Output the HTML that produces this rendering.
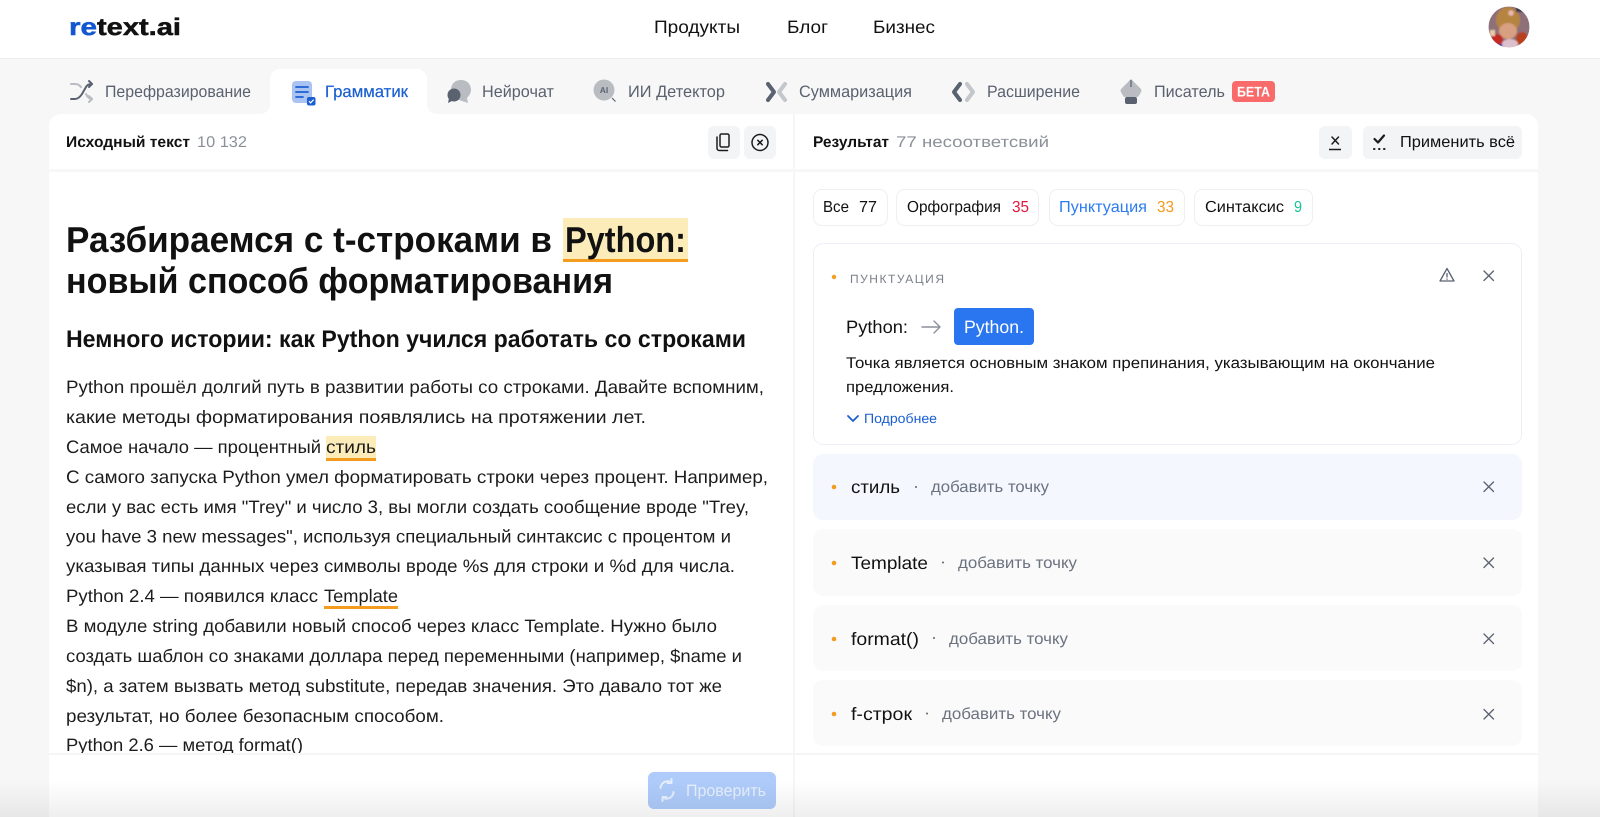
<!DOCTYPE html>
<html lang="ru">
<head>
<meta charset="utf-8">
<title>retext.ai</title>
<style>
html,body{margin:0;padding:0;width:1600px;height:817px;overflow:hidden;background:#f7f7f7}
svg{display:block}
text{font-family:"Liberation Sans",Arial,sans-serif;fill:#111}
.tab{font-size:16.5px;fill:#5a6270}
.b{font-size:18px;fill:#1c1c1c}
.s{font-size:16px}
.ln{fill:none;stroke-linecap:round;stroke-linejoin:round}
</style>
</head>
<body>
<svg xmlns="http://www.w3.org/2000/svg" width="1600" height="817" viewBox="0 0 1600 817" text-rendering="geometricPrecision">
<defs>
<clipPath id="av"><circle cx="1509" cy="27" r="20.5"/></clipPath>
<clipPath id="body"><rect x="49" y="172" width="744" height="581"/></clipPath>
<linearGradient id="sh" x1="0" y1="0" x2="0" y2="1"><stop offset="0" stop-color="#000" stop-opacity="0"/><stop offset="1" stop-color="#000" stop-opacity=".065"/></linearGradient>
<filter id="bl" x="-20%" y="-20%" width="140%" height="140%"><feGaussianBlur stdDeviation=".8"/></filter>
</defs>

<rect width="1600" height="817" fill="#f7f7f7"/>
<!-- header -->
<rect width="1600" height="58" fill="#fff"/>
<rect y="58" width="1600" height="1" fill="#eeeeee"/>
<text x="69" y="35" font-size="24" font-weight="700" style="fill:#1357d0;stroke:#1357d0;stroke-width:.5" textLength="28" lengthAdjust="spacingAndGlyphs">re</text>
<text x="97" y="35" font-size="24" font-weight="700" style="fill:#111;stroke:#111;stroke-width:.5" textLength="84" lengthAdjust="spacingAndGlyphs">text.ai</text>
<text x="654" y="33" font-size="18" textLength="86" lengthAdjust="spacingAndGlyphs">Продукты</text>
<text x="787" y="33" font-size="18" textLength="41" lengthAdjust="spacingAndGlyphs">Блог</text>
<text x="873" y="33" font-size="18" textLength="62" lengthAdjust="spacingAndGlyphs">Бизнес</text>
<!-- avatar -->
<g clip-path="url(#av)"><g filter="url(#bl)">
<rect x="1488" y="6" width="42" height="42" fill="#8d6f78"/>
<ellipse cx="1508" cy="20" rx="12" ry="13" fill="#b5843f"/>
<circle cx="1511" cy="13" r="2.800" fill="#e9b7ae"/>
<rect x="1516" y="5" width="8" height="7" fill="#3a3550"/>
<ellipse cx="1508" cy="31" rx="9" ry="8" fill="#d89f80"/>
<ellipse cx="1497" cy="40" rx="6" ry="6" fill="#c22a22"/>
<ellipse cx="1522" cy="39" rx="6" ry="7" fill="#b8401f"/>
<ellipse cx="1510" cy="44" rx="8" ry="5" fill="#dcc0cb"/>
<rect x="1490" y="30" width="5" height="6" fill="#e8c9a8"/>
<rect x="1497" y="44" width="5" height="4" fill="#2b3a9a"/>
</g></g>

<!-- panel -->
<path d="M49 817V126a12 12 0 0 1 12-12H1526a12 12 0 0 1 12 12V817Z" fill="#fff"/>
<!-- active tab -->
<path d="M260 114a10 10 0 0 0 10-10V79a10 10 0 0 1 10-10H417a10 10 0 0 1 10 10V104a10 10 0 0 0 10 10Z" fill="#fff"/>
<rect x="793" y="114" width="2" height="703" fill="#f6f6f6"/>
<rect x="49" y="169" width="1489" height="3" fill="#f7f7f7"/>
<rect x="49" y="753" width="1489" height="2" fill="#f5f5f5"/>

<!-- tabs -->
<g class="ln" stroke-width="2">
<path d="M71 99h4c3 0 5-2 7-5l4-7c1-2 3-3 6-3" stroke="#5a6270"/>
<path d="M89 81l3 3-3 3" stroke="#5a6270"/>
<path d="M71 84h4c3 0 4 1 6 3M86 94c1 2 3 5 6 5" stroke="#b9bcc1"/>
<path d="M89 96l3 3-3 3" stroke="#b9bcc1"/>
</g>
<text class="tab" x="105" y="97" textLength="146" lengthAdjust="spacingAndGlyphs">Перефразирование</text>

<rect x="292" y="81" width="20" height="22" rx="4" fill="#a9c4f2"/>
<g stroke="#1a5fd0" stroke-width="1.800" class="ln"><path d="M296 87h12M296 92h12M296 97h7"/></g>
<rect x="307" y="97" width="8.500" height="8.500" rx="2" fill="#1a5fd0"/>
<path d="M309 101.200l1.600 1.700 3-3.200" fill="none" stroke="#fff" stroke-width="1.200"/>
<text x="325" y="97" font-size="16.500" style="fill:#1a5fd0;stroke:#1a5fd0;stroke-width:.2" textLength="83" lengthAdjust="spacingAndGlyphs">Грамматик</text>

<path d="M461 80c-7 0-10 5-10 10 0 5 3 9 8 10l9 3-1-5c2-2 4-5 4-8 0-6-4-10-10-10Z" fill="#b9bcc1"/>
<circle cx="454" cy="95" r="6.500" fill="#5a6270"/>
<path d="M449 98l-1 5 4-2Z" fill="#5a6270"/>
<text class="tab" x="482" y="97" textLength="72" lengthAdjust="spacingAndGlyphs">Нейрочат</text>

<circle cx="604" cy="90" r="10.500" fill="#b9bcc1"/>
<path d="M612 98l3.500 3.500" stroke="#5a6270" stroke-width="1.200" fill="none"/>
<text x="604" y="93" font-size="8.500" font-weight="700" text-anchor="middle" style="fill:#5a6270">AI</text>
<text class="tab" x="628" y="97" textLength="97" lengthAdjust="spacingAndGlyphs">ИИ Детектор</text>

<g class="ln" stroke-width="4"><path d="M768 84l6 8-6 8" stroke="#5a6270"/><path d="M785 84l-6 8 6 8" stroke="#c3c6ca"/></g>
<text class="tab" x="799" y="97" textLength="113" lengthAdjust="spacingAndGlyphs">Суммаризация</text>

<g class="ln" stroke-width="4"><path d="M960 84l-6 8 6 8" stroke="#5a6270"/><path d="M967 84l6 8-6 8" stroke="#c3c6ca"/></g>
<text class="tab" x="987" y="97" textLength="93" lengthAdjust="spacingAndGlyphs">Расширение</text>

<path d="M1131 79l10 10c1 2 0 3-1 5l-2 3h-14l-2-3c-1-2-2-3-1-5Z" fill="#b9bcc1"/>
<path d="M1131 80v7" stroke="#5a6270" stroke-width="1.200"/>
<rect x="1125" y="97" width="12" height="7" rx="2" fill="#5a6270"/>
<text class="tab" x="1154" y="97" textLength="71" lengthAdjust="spacingAndGlyphs">Писатель</text>
<rect x="1232" y="81" width="43" height="21" rx="4" fill="#f96b6b"/>
<text x="1237" y="96.500" font-size="14" font-weight="700" style="fill:#fff" textLength="33" lengthAdjust="spacingAndGlyphs">БЕТА</text>

<!-- left head -->
<text x="66" y="147" font-size="15.500" font-weight="700" textLength="124" lengthAdjust="spacingAndGlyphs">Исходный текст</text>
<text x="197" y="147" font-size="15.500" style="fill:#8b9098" textLength="50" lengthAdjust="spacingAndGlyphs">10 132</text>
<rect x="708" y="126" width="32" height="33" rx="6" fill="#f3f4f6"/>
<rect x="744" y="126" width="32" height="33" rx="6" fill="#f3f4f6"/>
<g class="ln" stroke="#1c1c1c" stroke-width="1.500">
<rect x="720" y="134" width="9" height="13" rx="1.500"/>
<path d="M717 137v11c0 1.500 1 2.500 2.500 2.500h8"/>
<circle cx="760" cy="142.500" r="8"/>
<path d="M757.800 140.300l4.400 4.400M762.200 140.300l-4.400 4.400"/>
</g>

<!-- body -->
<rect x="563" y="218" width="125" height="44" fill="#fbecba"/>
<rect x="563" y="259" width="125" height="3" fill="#f39c1f"/>
<text x="66" y="252" font-size="36" font-weight="700" textLength="486" lengthAdjust="spacingAndGlyphs">Разбираемся с t-строками в</text>
<text x="565" y="252" font-size="36" font-weight="700" textLength="121" lengthAdjust="spacingAndGlyphs">Python:</text>
<text x="66" y="293" font-size="36" font-weight="700" textLength="547" lengthAdjust="spacingAndGlyphs">новый способ форматирования</text>
<text x="66" y="347" font-size="24" font-weight="700" textLength="680" lengthAdjust="spacingAndGlyphs">Немного истории: как Python учился работать со строками</text>

<rect x="326" y="436" width="50" height="25" fill="#fbecba"/>
<rect x="326" y="458" width="50" height="3" fill="#f39c1f"/>
<rect x="324" y="606" width="74" height="3" fill="#f39c1f"/>
<g clip-path="url(#body)">
<text class="b" x="66" y="393" textLength="698" lengthAdjust="spacingAndGlyphs">Python прошёл долгий путь в развитии работы со строками. Давайте вспомним,</text>
<text class="b" x="66" y="423" textLength="580" lengthAdjust="spacingAndGlyphs">какие методы форматирования появлялись на протяжении лет.</text>
<text class="b" x="66" y="453" textLength="255" lengthAdjust="spacingAndGlyphs">Самое начало — процентный</text>
<text class="b" x="326" y="453" textLength="50" lengthAdjust="spacingAndGlyphs">стиль</text>
<text class="b" x="66" y="483" textLength="702" lengthAdjust="spacingAndGlyphs">С самого запуска Python умел форматировать строки через процент. Например,</text>
<text class="b" x="66" y="513" textLength="683" lengthAdjust="spacingAndGlyphs">если у вас есть имя "Trey" и число 3, вы могли создать сообщение вроде "Trey,</text>
<text class="b" x="66" y="542.500" textLength="665" lengthAdjust="spacingAndGlyphs">you have 3 new messages", используя специальный синтаксис с процентом и</text>
<text class="b" x="66" y="572" textLength="669" lengthAdjust="spacingAndGlyphs">указывая типы данных через символы вроде %s для строки и %d для числа.</text>
<text class="b" x="66" y="602" textLength="252" lengthAdjust="spacingAndGlyphs">Python 2.4 — появился класс</text>
<text class="b" x="324" y="602" textLength="74" lengthAdjust="spacingAndGlyphs">Template</text>
<text class="b" x="66" y="632" textLength="651" lengthAdjust="spacingAndGlyphs">В модуле string добавили новый способ через класс Template. Нужно было</text>
<text class="b" x="66" y="662" textLength="676" lengthAdjust="spacingAndGlyphs">создать шаблон со знаками доллара перед переменными (например, $name и</text>
<text class="b" x="66" y="692" textLength="656" lengthAdjust="spacingAndGlyphs">$n), а затем вызвать метод substitute, передав значения. Это давало тот же</text>
<text class="b" x="66" y="722" textLength="378" lengthAdjust="spacingAndGlyphs">результат, но более безопасным способом.</text>
<text class="b" x="66" y="751" textLength="237" lengthAdjust="spacingAndGlyphs">Python 2.6 — метод format()</text>
</g>

<!-- check button -->
<rect x="648" y="772" width="128" height="37" rx="6" fill="#aecbfa"/>
<g class="ln" stroke="#e6effd" stroke-width="2">
<path d="M660.500 788a7 7 0 0 1 10-6M673.500 792a7 7 0 0 1-10 6"/>
<path d="M671.500 779v4h-4M662.500 801v-4h4"/>
</g>
<text x="686" y="796" font-size="16.500" style="fill:#e6effd" textLength="80" lengthAdjust="spacingAndGlyphs">Проверить</text>

<!-- right head -->
<text x="813" y="147" font-size="15.500" font-weight="700" textLength="76" lengthAdjust="spacingAndGlyphs">Результат</text>
<text x="896" y="147" font-size="15.500" style="fill:#8b9098" textLength="153" lengthAdjust="spacingAndGlyphs">77 несоответсвий</text>
<rect x="1319" y="126" width="33" height="33" rx="6" fill="#f3f4f6"/>
<rect x="1363" y="126" width="159" height="33" rx="6" fill="#f3f4f6"/>
<g class="ln" stroke="#1c1c1c" stroke-width="1.500">
<path d="M1332 137l6.500 7M1338.500 137l-6.500 7"/>
<path d="M1329 149.500h12" stroke-linecap="butt"/>
<path d="M1374.500 139l3.500 3.500 6-7" stroke-width="2.200"/>
<path d="M1374 149h.5M1379 149h.5M1384 149h.5" stroke-width="2"/>
</g>
<text x="1400" y="147" font-size="16" textLength="115" lengthAdjust="spacingAndGlyphs">Применить всё</text>

<!-- chips -->
<g fill="#fff" stroke="#eeeff2">
<rect x="813.500" y="189.500" width="74" height="36" rx="8"/>
<rect x="896.500" y="189.500" width="142" height="36" rx="8"/>
<rect x="1049.500" y="189.500" width="135" height="36" rx="8"/>
<rect x="1194.500" y="189.500" width="118" height="36" rx="8"/>
</g>
<text class="s" x="823" y="212" textLength="26" lengthAdjust="spacingAndGlyphs">Все</text>
<text class="s" x="859" y="212" textLength="18" lengthAdjust="spacingAndGlyphs">77</text>
<text class="s" x="907" y="212" textLength="94" lengthAdjust="spacingAndGlyphs">Орфография</text>
<text class="s" x="1012" y="212" style="fill:#e5173f" textLength="17" lengthAdjust="spacingAndGlyphs">35</text>
<text class="s" x="1059" y="212" style="fill:#2b7bf2" textLength="88" lengthAdjust="spacingAndGlyphs">Пунктуация</text>
<text class="s" x="1157" y="212" style="fill:#f39c1f" textLength="17" lengthAdjust="spacingAndGlyphs">33</text>
<text class="s" x="1205" y="212" textLength="79" lengthAdjust="spacingAndGlyphs">Синтаксис</text>
<text class="s" x="1294" y="212" style="fill:#1cc29a" textLength="8" lengthAdjust="spacingAndGlyphs">9</text>

<!-- main card -->
<rect x="813.500" y="243.500" width="708" height="201" rx="10" fill="#fff" stroke="#ebeff5"/>
<circle cx="834" cy="277" r="2.200" fill="#f39c1f"/>
<text x="850" y="283" font-size="12" style="fill:#7b8088" textLength="94" lengthAdjust="spacing">ПУНКТУАЦИЯ</text>
<g class="ln" stroke="#5a6270" stroke-width="1.300">
<path d="M1447 268.500l7 12.500h-14Z"/>
<path d="M1447 273.500v3.500M1447 279v.2"/>
<path d="M1484 271l9.500 9.500M1493.500 271l-9.500 9.500"/>
</g>
<text x="846" y="333" font-size="18" textLength="62" lengthAdjust="spacingAndGlyphs">Python:</text>
<g class="ln" stroke="#8b9098" stroke-width="1.400"><path d="M922 327h18M934 321l6 6-6 6"/></g>
<rect x="954" y="308" width="80" height="37" rx="4" fill="#2a76f0"/>
<text x="964" y="333" font-size="18" style="fill:#fff" textLength="60" lengthAdjust="spacingAndGlyphs">Python.</text>
<text x="846" y="368" font-size="15.500" textLength="589" lengthAdjust="spacingAndGlyphs">Точка является основным знаком препинания, указывающим на окончание</text>
<text x="846" y="392" font-size="15.500" textLength="108" lengthAdjust="spacingAndGlyphs">предложения.</text>
<path class="ln" d="M848 416l5 5 5-5" stroke="#1a5fd0" stroke-width="1.800"/>
<text x="864" y="423" font-size="13.500" style="fill:#1a5fd0" textLength="73" lengthAdjust="spacingAndGlyphs">Подробнее</text>

<!-- rows -->
<rect x="813" y="454" width="709" height="66" rx="10" fill="#f4f7fe"/>
<rect x="813" y="529" width="709" height="67" rx="10" fill="#fafafa"/>
<rect x="813" y="605" width="709" height="66" rx="10" fill="#fafafa"/>
<rect x="813" y="680" width="709" height="66" rx="10" fill="#fafafa"/>
<g fill="#f39c1f"><circle cx="834" cy="487" r="2.300"/><circle cx="834" cy="563" r="2.300"/><circle cx="834" cy="639" r="2.300"/><circle cx="834" cy="714" r="2.300"/></g>
<g fill="#5a6270"><circle cx="916" cy="487" r="1"/><circle cx="943" cy="562.500" r="1"/><circle cx="934" cy="638" r="1"/><circle cx="927" cy="713.500" r="1"/></g>
<text x="851" y="493" font-size="18" textLength="49" lengthAdjust="spacingAndGlyphs">стиль</text>
<text x="931" y="492" font-size="16" style="fill:#6b7280" textLength="118" lengthAdjust="spacingAndGlyphs">добавить точку</text>
<text x="851" y="569" font-size="18" textLength="77" lengthAdjust="spacingAndGlyphs">Template</text>
<text x="958" y="568" font-size="16" style="fill:#6b7280" textLength="119" lengthAdjust="spacingAndGlyphs">добавить точку</text>
<text x="851" y="645" font-size="18" textLength="68" lengthAdjust="spacingAndGlyphs">format()</text>
<text x="949" y="644" font-size="16" style="fill:#6b7280" textLength="119" lengthAdjust="spacingAndGlyphs">добавить точку</text>
<text x="851" y="720" font-size="18" textLength="61" lengthAdjust="spacingAndGlyphs">f-строк</text>
<text x="942" y="719" font-size="16" style="fill:#6b7280" textLength="119" lengthAdjust="spacingAndGlyphs">добавить точку</text>
<g class="ln" stroke="#5a6270" stroke-width="1.300">
<path d="M1484 482l9.500 9.500M1493.500 482l-9.500 9.500"/>
<path d="M1484 558l9.500 9.500M1493.500 558l-9.500 9.500"/>
<path d="M1484 634l9.500 9.500M1493.500 634l-9.500 9.500"/>
<path d="M1484 709.500l9.500 9.500M1493.500 709.500l-9.500 9.500"/>
</g>

<!-- bottom shade -->
<rect y="780" width="1600" height="37" fill="url(#sh)"/>
</svg>
</body>
</html>
